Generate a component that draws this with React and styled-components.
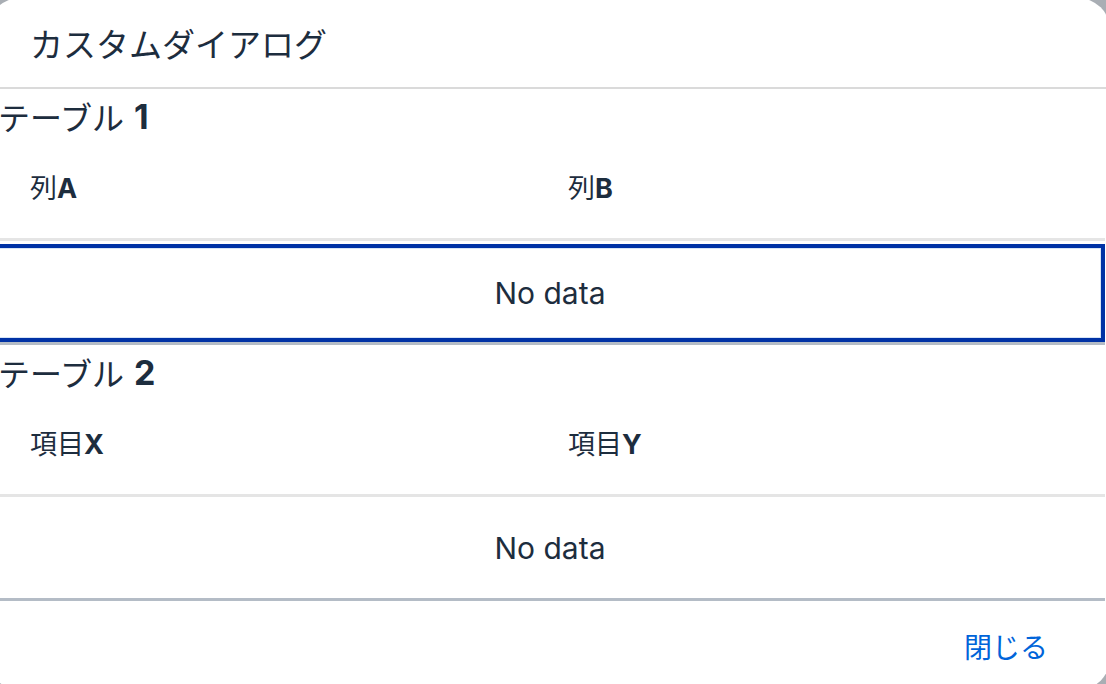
import React from 'react';
import styled, { createGlobalStyle } from 'styled-components';

const GlobalStyle = createGlobalStyle`
  html, body {
    margin: 0;
    padding: 0;
    background: #a9aeb4;
    overflow: hidden;
  }
  body {
    font-family: "Inter", "Noto Sans CJK JP", sans-serif;
    color: #1d2d3e;
  }
`;

const Dialog = styled.section`
  box-sizing: border-box;
  width: 1122px;
  height: 692px;
  margin: -2px 0 0 -12px;
  background: #fff;
  border-radius: 32px;
  overflow: hidden;
  display: flex;
  flex-direction: column;
`;

const Header = styled.header`
  box-sizing: border-box;
  height: 91px;
  padding-left: 42px;
  display: flex;
  align-items: center;
  font-size: 33px;
  border-bottom: 2px solid #dadada;
`;

const Content = styled.div`
  padding: 0 5px 0 7px;
  display: flex;
  flex-direction: column;
`;

const TableTitle = styled.h2`
  margin: 0 0 0 3px;
  height: 56px;
  padding-bottom: 2px;
  box-sizing: border-box;
  display: flex;
  align-items: center;
  font-size: 32px;
  font-weight: 400;
`;

const Strong = styled.span`
  font-weight: 700;
`;

const Num = styled.span`
  font-weight: 700;
  font-size: 34px;
  margin-left: 10px;
`;

const HeaderRow = styled.div`
  display: grid;
  grid-template-columns: 1fr 1fr;
  height: 96px;
  padding-bottom: 11px;
  box-sizing: border-box;
  align-items: center;
  border-bottom: 3px solid #e5e5e5;
`;

const HeaderCell = styled.div`
  padding-left: ${({ $pad }) => $pad}px;
  font-size: 27px;
`;

const NoDataRow = styled.div`
  height: ${({ $focused }) => ($focused ? 98 : 101)}px;
  margin-top: ${({ $focused }) => ($focused ? 3 : 0)}px;
  display: flex;
  align-items: center;
  justify-content: center;
  font-size: 30px;
  border-bottom: 3px solid #b4bcc6;
  box-shadow: ${({ $focused }) =>
        $focused ? 'inset 0 0 0 4px #0032a5, inset 0 0 0 5px #d6e4f5' : 'none'};
`;

const Footer = styled.footer`
  flex: 1;
  display: flex;
  align-items: center;
  justify-content: flex-end;
  padding-right: 62px;
`;

const CloseButton = styled.button`
  border: none;
  background: none;
  padding: 0;
  font-family: inherit;
  font-size: 28px;
  color: #0064d9;
  cursor: pointer;
`;

const tables = [
    { num: 1, cols: ['列', 'A', '列', 'B'], focused: true },
    { num: 2, cols: ['項目', 'X', '項目', 'Y'], focused: false },
];

const App = () => {
    return (
        <>
            <GlobalStyle />
            <Dialog>
                <Header>カスタムダイアログ</Header>
                <Content>
                    {tables.map(t => (
                        <div key={t.num}>
                            <TableTitle>テーブル<Num>{t.num}</Num></TableTitle>
                            <HeaderRow>
                                <HeaderCell $pad={35}>{t.cols[0]}<Strong>{t.cols[1]}</Strong></HeaderCell>
                                <HeaderCell $pad={18}>{t.cols[2]}<Strong>{t.cols[3]}</Strong></HeaderCell>
                            </HeaderRow>
                            <NoDataRow $focused={t.focused}>No data</NoDataRow>
                        </div>
                    ))}
                </Content>
                <Footer>
                    <CloseButton>閉じる</CloseButton>
                </Footer>
            </Dialog>
        </>
    );
};

export default App;
